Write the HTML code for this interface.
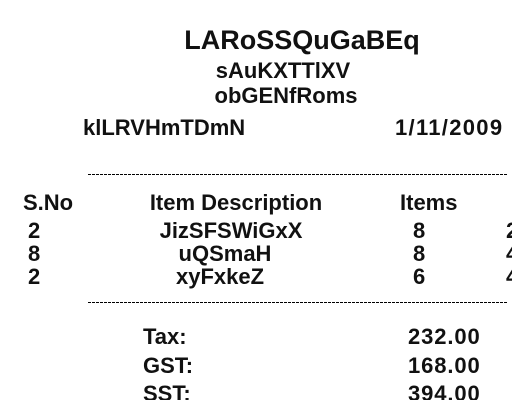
<!DOCTYPE html>
<html><head><meta charset="utf-8"><style>
html,body{margin:0;padding:0;width:512px;height:400px;overflow:hidden;background:#fff}
body{position:relative;font-family:"Liberation Sans",sans-serif;font-weight:bold;color:#111}
.t{position:absolute;white-space:nowrap;line-height:1}
.c{transform:translateX(-50%)}
.n{letter-spacing:0.9px}
.d{position:absolute;left:88px;width:420px;height:1px;background:repeating-linear-gradient(90deg,#000 0 3px,transparent 3px 4px)}
</style></head><body>
<div class="t c" style="left:302px;top:27px;font-size:27px">LARoSSQuGaBEq</div>
<div class="t c" style="left:283px;top:60px;font-size:22px">sAuKXTTlXV</div>
<div class="t c" style="left:286px;top:85px;font-size:22px">obGENfRoms</div>
<div class="t" style="left:83px;top:117px;font-size:22px">klLRVHmTDmN</div>
<div class="t" style="left:395px;top:117px;font-size:22px;letter-spacing:1.3px">1/11/2009</div>
<div class="d" style="top:174px"></div>
<div class="t" style="left:23px;top:192px;font-size:22px">S.No</div>
<div class="t c" style="left:236px;top:192px;font-size:22px">Item Description</div>
<div class="t" style="left:400px;top:192px;font-size:22px">Items</div>
<div class="t" style="left:28px;top:220px;font-size:22px">2</div>
<div class="t c" style="left:231px;top:220px;font-size:22px">JizSFSWiGxX</div>
<div class="t" style="left:413px;top:220px;font-size:22px">8</div>
<div class="t" style="left:506px;top:220px;font-size:22px">2</div>
<div class="t" style="left:28px;top:243px;font-size:22px">8</div>
<div class="t c" style="left:225px;top:243px;font-size:22px">uQSmaH</div>
<div class="t" style="left:413px;top:243px;font-size:22px">8</div>
<div class="t" style="left:506px;top:243px;font-size:22px">4</div>
<div class="t" style="left:28px;top:266px;font-size:22px">2</div>
<div class="t c" style="left:220px;top:266px;font-size:22px">xyFxkeZ</div>
<div class="t" style="left:413px;top:266px;font-size:22px">6</div>
<div class="t" style="left:506px;top:266px;font-size:22px">4</div>
<div class="d" style="top:302px"></div>
<div class="t" style="left:143px;top:326px;font-size:22px">Tax:</div>
<div class="t n" style="left:408px;top:326px;font-size:22px">232.00</div>
<div class="t" style="left:143px;top:355px;font-size:22px">GST:</div>
<div class="t n" style="left:408px;top:355px;font-size:22px">168.00</div>
<div class="t" style="left:143px;top:383px;font-size:22px">SST:</div>
<div class="t n" style="left:408px;top:383px;font-size:22px">394.00</div>
</body></html>
